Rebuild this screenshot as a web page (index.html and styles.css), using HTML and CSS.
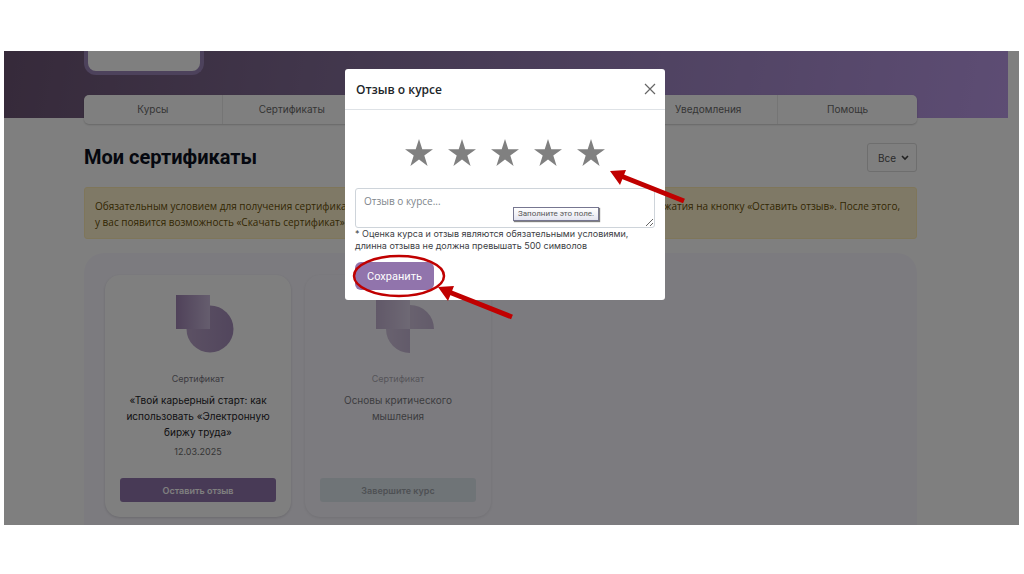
FILE: index.html
```html
<!DOCTYPE html>
<html lang="ru">
<head>
  <meta charset="UTF-8">
  <meta name="viewport" content="width=device-width, initial-scale=1.0">
  <title>Мои сертификаты</title>
  <link rel="stylesheet" href="styles.css">
</head>
<body>
  <div class="screen">
    <header class="banner">
      <div class="logo"></div>
    </header>

    <main class="container">
      <nav class="tabs">
        <a href="#">Курсы</a>
        <a href="#">Сертификаты</a>
        <span></span>
        <span></span>
        <a href="#">Уведомления</a>
        <a href="#">Помощь</a>
      </nav>

      <div class="title-row">
        <h1>Мои сертификаты</h1>
        <div class="filter">
          <select aria-label="Фильтр">
            <option>Все</option>
          </select>
          <svg width="8" height="6" viewBox="0 0 8 6" fill="none" stroke="#444" stroke-width="1.6"><path d="M1 1l3 3 3-3"/></svg>
        </div>
      </div>

      <div class="notice">
        <div class="notice-line">
          <span>Обязательным условием для получения сертификата</span>
          <span>нажатия на кнопку «Оставить отзыв». После этого,</span>
        </div>
        <div>у вас появится возможность «Скачать сертификат».</div>
      </div>

      <section class="cards">
        <article class="card">
          <svg class="shape" width="58" height="58" viewBox="0 0 58 58">
            <defs>
              <linearGradient id="square" x1="0" x2="1"><stop offset="0" stop-color="#a084b4"/><stop offset="1" stop-color="#cbbbdc"/></linearGradient>
              <linearGradient id="circle" x1="0" x2="1"><stop offset="0" stop-color="#b8a2c8"/><stop offset="1" stop-color="#a48cba"/></linearGradient>
            </defs>
            <circle cx="34" cy="34" r="23.500" fill="url(#circle)"/>
            <rect width="34" height="34" fill="url(#square)"/>
          </svg>
          <div class="kind">Сертификат</div>
          <h2>«Твой карьерный старт: как использовать «Электронную биржу труда»</h2>
          <div class="date">12.03.2025</div>
          <button class="review">Оставить отзыв</button>
        </article>

        <article class="card locked">
          <svg class="shape" width="58" height="58" viewBox="0 0 58 58">
            <rect width="34" height="34" fill="url(#square)"/>
            <path d="M34 10a24 24 0 0 1 24 24H34z" fill="url(#circle)"/>
            <path d="M34 34v24a24 24 0 0 1-24-24z" fill="url(#circle)"/>
          </svg>
          <div class="kind">Сертификат</div>
          <h2>Основы критического мышления</h2>
          <button class="review" disabled>Завершите курс</button>
        </article>
      </section>
    </main>

    <div class="backdrop">
      <form class="modal">
        <div class="modal-header">
          <h3>Отзыв о курсе</h3>
          <button type="button" class="close" aria-label="Закрыть">
            <svg width="12" height="12" viewBox="0 0 12 12" stroke="#666" stroke-width="1.2"><path d="M1 1l10 10M11 1L1 11"/></svg>
          </button>
        </div>
        <div class="modal-body">
          <div class="stars">
            <label><input type="radio" name="rate" value="1" aria-label="1"><svg viewBox="0 0 28 27"><path d="M14 0l3.300 10.300H28l-8.700 6.300L22.600 27 14 20.600 5.400 27l3.300-10.400L0 10.300h10.700z"/></svg></label>
            <label><input type="radio" name="rate" value="2" aria-label="2"><svg viewBox="0 0 28 27"><path d="M14 0l3.300 10.300H28l-8.700 6.300L22.600 27 14 20.600 5.400 27l3.300-10.400L0 10.300h10.700z"/></svg></label>
            <label><input type="radio" name="rate" value="3" aria-label="3"><svg viewBox="0 0 28 27"><path d="M14 0l3.300 10.300H28l-8.700 6.300L22.600 27 14 20.600 5.400 27l3.300-10.400L0 10.300h10.700z"/></svg></label>
            <label><input type="radio" name="rate" value="4" aria-label="4"><svg viewBox="0 0 28 27"><path d="M14 0l3.300 10.300H28l-8.700 6.300L22.600 27 14 20.600 5.400 27l3.300-10.400L0 10.300h10.700z"/></svg></label>
            <label><input type="radio" name="rate" value="5" aria-label="5"><svg viewBox="0 0 28 27"><path d="M14 0l3.300 10.300H28l-8.700 6.300L22.600 27 14 20.600 5.400 27l3.300-10.400L0 10.300h10.700z"/></svg></label>
          </div>
          <textarea placeholder="Отзыв о курсе..." aria-label="Отзыв о курсе" required></textarea>
          <p class="hint">* Оценка курса и отзыв являются обязательными условиями, длинна отзыва не должна превышать 500 символов</p>
          <button class="save">Сохранить</button>
        </div>
        <div class="tooltip">Заполните это поле.</div>
        <!-- pointers to the last star and the save button -->
        <svg class="marks" width="320" height="260" viewBox="0 0 320 260">
          <g fill="none" stroke="#c00000">
            <ellipse cx="54" cy="207" rx="45" ry="20" stroke-width="2.500"/>
            <path d="M339 132L276 107M167 248L104 223" stroke-width="5"/>
          </g>
          <path d="M265 102l16-1-6 15zM93 218l16-1-6 15z" fill="#c00000"/>
        </svg>
      </form>
    </div>
  </div>
</body>
</html>
```
FILE: styles.css
```css
* {
  box-sizing: border-box;
}

body {
  margin: 0;
  padding: 51px 5px 48px 4px;
  background: #fff;
  font-family: Inter, sans-serif;
  font-size: 10px;
  color: #212529;
}

h1, h2, h3, p {
  margin: 0;
}

button, select, textarea {
  font-family: inherit;
}

.screen {
  position: relative;
}

.banner {
  height: 67px;
  margin-right: 11px;
  padding-left: 80px;
  background: linear-gradient(100deg, #6c5474, #86709c 35%, #a086c4 65%, #bb9ae8);
}

.logo {
  width: 120px;
  height: 24px;
  background: #fff;
  border: 4px solid #9a84b8;
  border-top: 0;
  border-radius: 0 0 12px 12px;
}

.container {
  padding: 0 102px 0 80px;
}

.tabs {
  display: grid;
  grid-template-columns: repeat(6, 1fr);
  margin-top: -23px;
  background: #fff;
  border-radius: 5px;
  box-shadow: 0 1px 2px rgba(0, 0, 0, 0.2);
  position: relative;
}

.tabs > * {
  height: 29px;
  line-height: 29px;
  text-align: center;
  color: #6b6b6b;
  text-decoration: none;
  border-right: 1px solid #eaeaea;
}

.tabs > :last-child {
  border-right: 0;
}

.title-row {
  display: flex;
  justify-content: space-between;
  align-items: center;
  margin: 19px 0 15px;
}

h1 {
  font-family: Roboto, sans-serif;
  font-size: 20px;
  line-height: 29px;
  color: #0b1020;
}

.filter {
  display: flex;
  align-items: center;
  height: 29px;
  padding: 0 7px 0 10px;
  border: 1px solid #dcdcdc;
  border-radius: 3px;
}

.filter select {
  appearance: none;
  border: 0;
  padding: 0;
  width: 22px;
  margin-right: 1px;
  background: none;
  font-size: 10px;
  color: #555;
}

.notice {
  padding: 10px 10px 8px;
  background: #fff3cd;
  border: 1px solid #ffecb5;
  border-radius: 3px;
  font-family: "Open Sans", sans-serif;
  line-height: 16px;
  color: #664d03;
}

.notice-line {
  display: flex;
  justify-content: space-between;
  padding-right: 6px;
}

.cards {
  display: grid;
  grid-template-columns: repeat(4, 1fr);
  gap: 14px;
  margin-top: 14px;
  padding: 22px 26px 8px 21px;
  background: #f9f7ff;
  border-radius: 20px 20px 0 0;
}

.card {
  display: flex;
  flex-direction: column;
  align-items: center;
  min-height: 242px;
  padding: 20px 15px 15px;
  background: #fff;
  border-radius: 15px;
  box-shadow: 0 1px 3px rgba(0, 0, 0, 0.15);
  text-align: center;
}

.shape {
  margin-right: -14px;
}

.kind {
  margin-top: 20px;
  font-size: 9px;
  line-height: 12px;
  color: #77757f;
}

h2 {
  margin-top: 7px;
  font-size: 10px;
  font-weight: 400;
  line-height: 16px;
  color: #1d1d28;
}

.date {
  margin-top: 6px;
  font-size: 9px;
  line-height: 12px;
  color: #6b6b6b;
}

.review {
  width: 100%;
  height: 24px;
  margin-top: auto;
  padding: 0;
  border: 0;
  border-radius: 3px;
  background: #9174ac;
  color: #fff;
  font-size: 9px;
  font-weight: 600;
}

.locked {
  background: #faf8ff;
  opacity: 0.6;
}

.review:disabled {
  background: #cfdfe5;
  color: #5f6a70;
}

.backdrop {
  position: absolute;
  inset: 0;
  padding: 18px 13px 0 0;
  background: rgba(0, 0, 0, 0.5);
}

.modal {
  position: relative;
  width: 320px;
  margin: 0 auto;
  background: #fff;
  border-radius: 3px;
}

.modal-header {
  display: flex;
  justify-content: space-between;
  align-items: center;
  height: 41px;
  padding: 0 9px 0 11px;
  border-bottom: 1px solid #dee2e6;
}

h3 {
  font-family: "Open Sans", sans-serif;
  font-size: 12px;
  font-weight: 600;
}

.close {
  display: flex;
  padding: 0;
  border: 0;
  background: none;
}

.modal-body {
  padding: 29px 10px 10px;
}

.stars {
  display: flex;
  justify-content: center;
  gap: 15px;
  margin-bottom: 22px;
}

.stars input {
  display: none;
}

.stars svg {
  display: block;
  width: 28px;
  height: 27px;
  fill: #808080;
}

textarea {
  display: block;
  width: 100%;
  height: 40px;
  padding: 5px 8px;
  border: 1px solid #ced4da;
  border-radius: 3px;
  font-family: "Open Sans", sans-serif;
  font-size: 10px;
}

textarea::placeholder {
  color: #80868c;
}

.hint {
  font-size: 9px;
  line-height: 12px;
  color: #3c4044;
}

.save {
  display: block;
  height: 28px;
  margin-top: 10px;
  padding: 0 12px;
  border: 0;
  border-radius: 6px;
  background: #9174ac;
  color: #fff;
  font-family: Roboto, sans-serif;
  font-size: 11px;
}

.tooltip {
  position: absolute;
  top: 138px;
  left: 168px;
  padding: 0 4px;
  border: 1px solid #767690;
  background: linear-gradient(#fff, #e4e5f0);
  box-shadow: 1px 1px 1px rgba(0, 0, 0, 0.5);
  font-family: Roboto, sans-serif;
  font-size: 8px;
  line-height: 12px;
  color: #575757;
}

.marks {
  position: absolute;
  top: 0;
  left: 0;
  overflow: visible;
  pointer-events: none;
}
```
